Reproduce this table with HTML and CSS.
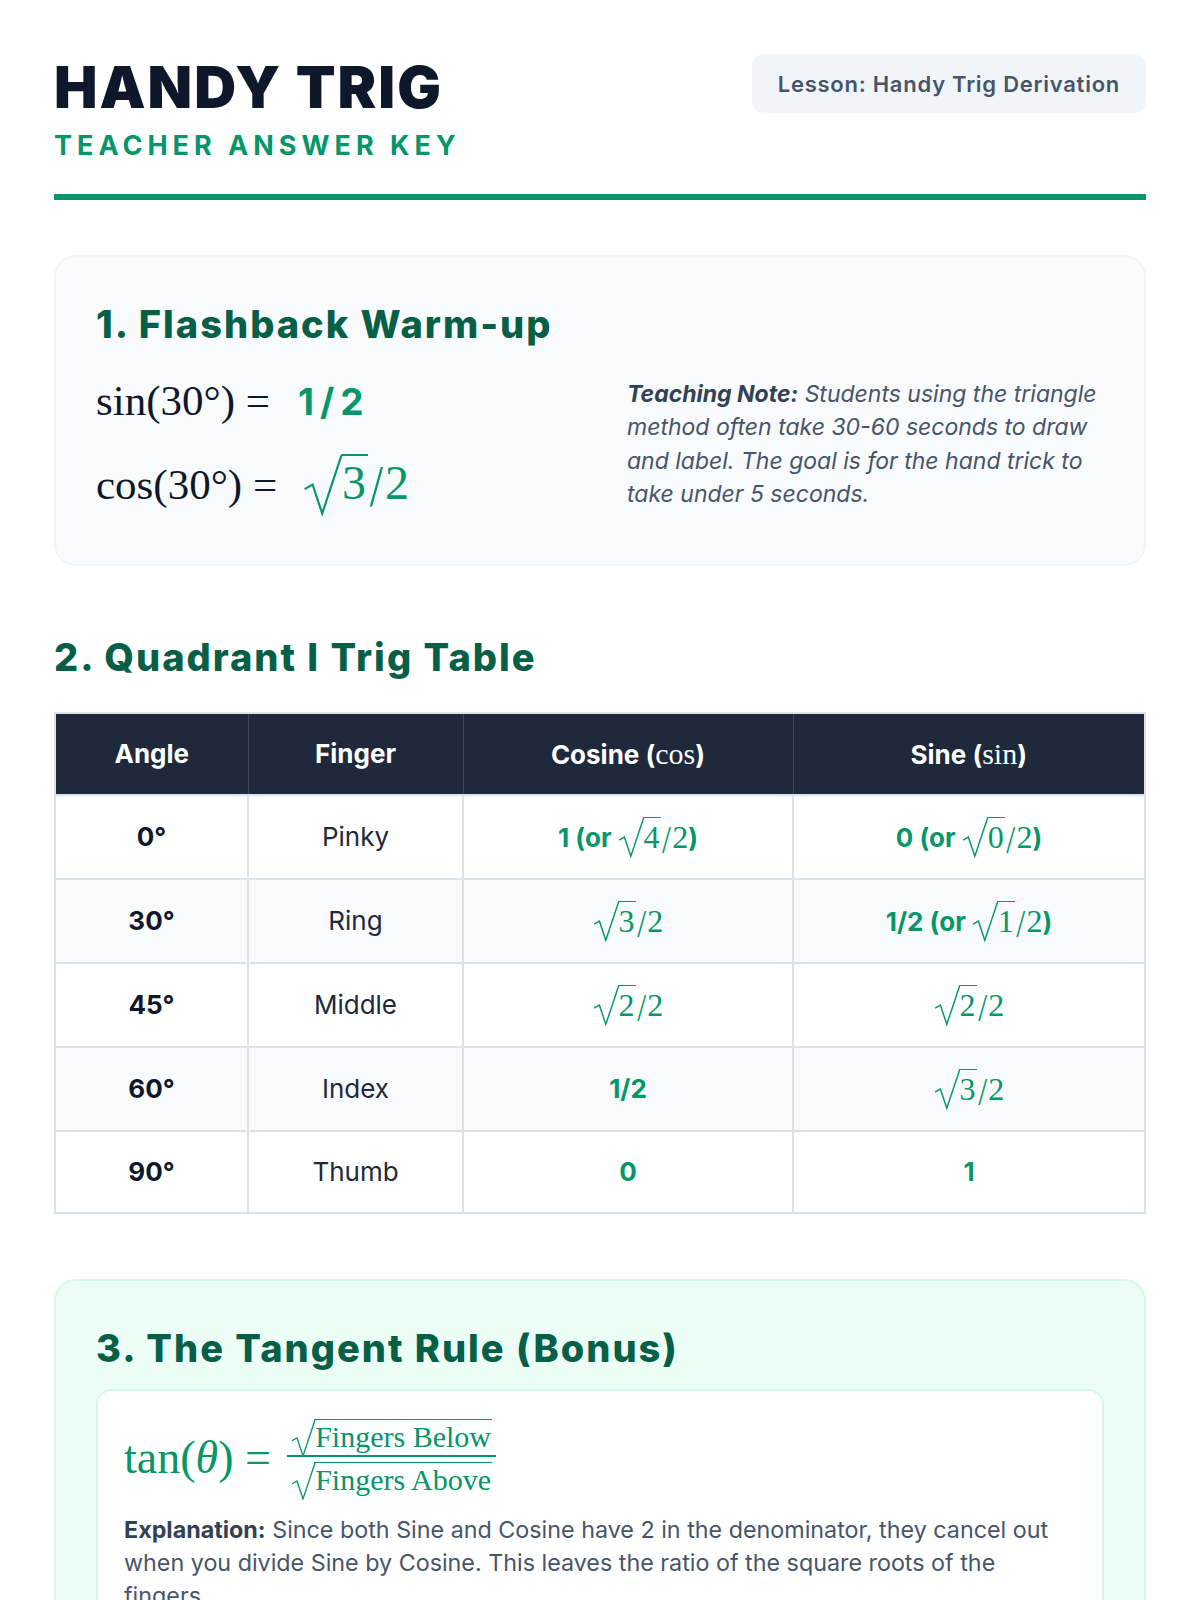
FILE: index.html
```html
<!DOCTYPE html>
<html lang="en">
<head>
<meta charset="utf-8">
<title>Handy Trig - Teacher Answer Key</title>
<link rel="stylesheet" href="styles.css">
</head>
<body>
<div class="page">
  <header class="top">
    <div class="brand">
      <h1 class="title">HANDY TRIG</h1>
      <div class="subtitle">TEACHER ANSWER KEY</div>
    </div>
    <div class="badge">Lesson: Handy Trig Derivation</div>
  </header>

  <section class="card card-grey">
    <h2 class="sec-title">1. Flashback Warm-up</h2>
    <div class="warm-grid">
      <div class="warm-math">
        <div class="eq-line"><span class="m">sin(30°)&nbsp;=</span><span class="ans-sans">1/2</span></div>
        <div class="eq-line"><span class="m">cos(30°)&nbsp;=</span><span class="m green ans-m"><span class="sq"><svg class="rs" viewBox="0 0 24 40" preserveAspectRatio="none"><path d="M1 23 L6 20 L12 39 L24 1"/></svg><span class="ov">3</span></span><span class="sl">/</span>2</span></div>
      </div>
      <p class="note"><b>Teaching Note:</b> Students using the triangle method often take 30-60 seconds to draw and label. The goal is for the hand trick to take under 5 seconds.</p>
    </div>
  </section>

  <h2 class="sec-title sec-plain">2. Quadrant I Trig Table</h2>
  <table class="trig">
    <colgroup>
      <col class="c1"><col class="c2"><col class="c3"><col class="c4">
    </colgroup>
    <thead>
      <tr><th>Angle</th><th>Finger</th><th>Cosine (<span class="m">cos</span>)</th><th>Sine (<span class="m">sin</span>)</th></tr>
    </thead>
    <tbody>
      <tr>
        <td class="ang">0°</td><td class="fing">Pinky</td>
        <td class="val">1 (or <span class="m"><span class="sq"><svg class="rs" viewBox="0 0 24 40" preserveAspectRatio="none"><path d="M1 23 L6 20 L12 39 L24 1"/></svg><span class="ov">4</span></span><span class="sl">/</span>2</span>)</td>
        <td class="val">0 (or <span class="m"><span class="sq"><svg class="rs" viewBox="0 0 24 40" preserveAspectRatio="none"><path d="M1 23 L6 20 L12 39 L24 1"/></svg><span class="ov">0</span></span><span class="sl">/</span>2</span>)</td>
      </tr>
      <tr>
        <td class="ang">30°</td><td class="fing">Ring</td>
        <td class="val"><span class="m"><span class="sq"><svg class="rs" viewBox="0 0 24 40" preserveAspectRatio="none"><path d="M1 23 L6 20 L12 39 L24 1"/></svg><span class="ov">3</span></span><span class="sl">/</span>2</span></td>
        <td class="val">1/2 (or <span class="m"><span class="sq"><svg class="rs" viewBox="0 0 24 40" preserveAspectRatio="none"><path d="M1 23 L6 20 L12 39 L24 1"/></svg><span class="ov">1</span></span><span class="sl">/</span>2</span>)</td>
      </tr>
      <tr>
        <td class="ang">45°</td><td class="fing">Middle</td>
        <td class="val"><span class="m"><span class="sq"><svg class="rs" viewBox="0 0 24 40" preserveAspectRatio="none"><path d="M1 23 L6 20 L12 39 L24 1"/></svg><span class="ov">2</span></span><span class="sl">/</span>2</span></td>
        <td class="val"><span class="m"><span class="sq"><svg class="rs" viewBox="0 0 24 40" preserveAspectRatio="none"><path d="M1 23 L6 20 L12 39 L24 1"/></svg><span class="ov">2</span></span><span class="sl">/</span>2</span></td>
      </tr>
      <tr>
        <td class="ang">60°</td><td class="fing">Index</td>
        <td class="val">1/2</td>
        <td class="val"><span class="m"><span class="sq"><svg class="rs" viewBox="0 0 24 40" preserveAspectRatio="none"><path d="M1 23 L6 20 L12 39 L24 1"/></svg><span class="ov">3</span></span><span class="sl">/</span>2</span></td>
      </tr>
      <tr>
        <td class="ang">90°</td><td class="fing">Thumb</td>
        <td class="val">0</td>
        <td class="val">1</td>
      </tr>
    </tbody>
  </table>

  <section class="card card-green">
    <h2 class="sec-title">3. The Tangent Rule (Bonus)</h2>
    <div class="inner">
      <div class="tan-eq m green">
        <span class="tan-lhs">tan(<i>θ</i>)&nbsp;=</span>
        <span class="frac">
          <span class="num"><span class="sq"><svg class="rs" viewBox="0 0 24 40" preserveAspectRatio="none"><path d="M1 23 L6 20 L12 39 L24 1"/></svg><span class="ov">Fingers Below</span></span></span>
          <span class="den"><span class="sq"><svg class="rs" viewBox="0 0 24 40" preserveAspectRatio="none"><path d="M1 23 L6 20 L12 39 L24 1"/></svg><span class="ov">Fingers Above</span></span></span>
        </span>
      </div>
      <p class="expl"><b>Explanation:</b> Since both Sine and Cosine have 2 in the denominator, they cancel out when you divide Sine by Cosine. This leaves the ratio of the square roots of the fingers.</p>
    </div>
  </section>
</div>
</body>
</html>
```

FILE: styles.css
```css
* { box-sizing: border-box; }
html, body { margin: 0; padding: 0; background: #ffffff; }
body {
  font-family: Inter, "Noto Sans", "Liberation Sans", sans-serif;
  color: #1e293b;
}
.page { padding: 54px 54px 40px; }

.top {
  display: flex;
  justify-content: space-between;
  align-items: flex-start;
  padding-bottom: 32px;
  border-bottom: 6px solid #059669;
}
.title {
  margin: 0;
  font-size: 58px;
  line-height: 1;
  font-weight: 900;
  letter-spacing: 2px;
  color: #0f172a;
  padding-top: 4px;
}
.subtitle {
  margin-top: 14px;
  font-size: 27px;
  font-weight: 700;
  letter-spacing: 5px;
  color: #059669;
  line-height: 1.2;
}
.badge {
  background: #f1f5f9;
  border-radius: 12px;
  padding: 0 26px;
  height: 59px;
  display: flex;
  align-items: center;
  font-size: 22px;
  font-weight: 600;
  letter-spacing: 0.75px;
  color: #475569;
}

.card {
  border-radius: 22px;
  border: 2px solid #f1f5f9;
  padding: 45px 40px 39px;
}
.card-grey { background: #f8fafc; margin-top: 55px; }
.card-green { background: #ecfdf5; border-color: #d1fae5; margin-top: 65px; padding-bottom: 38px; }

.sec-title {
  margin: 0;
  font-size: 38px;
  line-height: 1.2;
  font-weight: 800;
  color: #065f46;
  letter-spacing: 2px;
}
.sec-plain { margin-top: 69px; margin-bottom: 31px; }

.m { font-family: "Liberation Serif", "DejaVu Serif", serif; font-weight: 400; }
.green { color: #059669; }

.warm-grid {
  display: grid;
  grid-template-columns: 1fr 477px;
  column-gap: 0;
  align-items: center;
  margin-top: 9px;
}
.eq-line {
  font-size: 43px;
  line-height: 84px;
  height: 84px;
  color: #0f172a;
  white-space: nowrap;
}
.ans-sans {
  font-family: Inter, "Noto Sans", sans-serif;
  font-weight: 700;
  color: #059669;
  font-size: 37px;
  letter-spacing: 6px;
  margin-left: 28px;
}
.ans-m { margin-left: 26px; font-size: 48px; }

/* square root: svg radical sign + vinculum over radicand */
.sq {
  position: relative;
  display: inline-block;
  padding-left: 0.78em;
  line-height: 1;
}
.rs {
  position: absolute;
  left: 0;
  top: 0;
  width: 0.8em;
  height: calc(100% + 0.16em);
  overflow: visible;
}
.rs path {
  fill: none;
  stroke: currentColor;
  stroke-width: 0.045em;
  stroke-linejoin: miter;
  vector-effect: non-scaling-stroke;
}
.ov {
  display: inline-block;
  border-top: 0.045em solid currentColor;
  padding: 0.07em 0.04em 0 0.03em;
  line-height: 1;
}
.sl { display: inline-block; transform: scaleY(1.25) translateY(0.05em); margin: 0 0.04em; }

.note {
  margin: 8px 0 0;
  font-size: 23px;
  line-height: 33.5px;
  font-style: italic;
  color: #475569;
}
.note b { color: #334155; font-weight: 700; }

.trig {
  width: 100%;
  border-collapse: collapse;
  table-layout: fixed;
  border: 2px solid #dbe2ea;
}
.c1 { width: 193px; }
.c2 { width: 215px; }
.c3 { width: 330px; }
.c4 { width: auto; }
.trig th {
  background: #1e293b;
  color: #ffffff;
  font-weight: 700;
  font-size: 26px;
  height: 82px;
  border: 1px solid #3b4658;
  text-align: center;
  padding: 0 12px;
}
.trig th .m { font-size: 30px; font-weight: 400; }
.trig td {
  height: 84px;
  border: 2px solid #dbe2ea;
  text-align: center;
  padding: 0 10px;
  font-size: 26px;
}
.trig tbody tr:last-child td { height: 82px; }
.trig tbody tr:nth-child(even) td { background: #f8fafc; }
.trig .ang { font-weight: 700; color: #0f172a; }
.trig .fing { color: #1e293b; }
.trig .val { color: #059669; font-weight: 700; white-space: nowrap; }
.trig .val .m { font-size: 32px; }

.inner {
  background: #ffffff;
  border: 2px solid #d1fae5;
  border-radius: 16px;
  margin-top: 18px;
  padding: 28px 26px 30px;
}
.tan-eq {
  display: flex;
  align-items: center;
  font-size: 46px;
}
.tan-lhs { white-space: nowrap; margin-right: 16px; }
.frac {
  display: inline-flex;
  flex-direction: column;
  align-items: center;
  font-size: 30px;
  line-height: 1;
}
.num { padding: 0 4px 3px; border-bottom: 2px solid currentColor; }
.den { padding: 5px 4px 0; }
.expl {
  margin: 18px 0 0;
  font-size: 23.3px;
  line-height: 33px;
  color: #475569;
}
.expl b { color: #334155; font-weight: 700; }
```
